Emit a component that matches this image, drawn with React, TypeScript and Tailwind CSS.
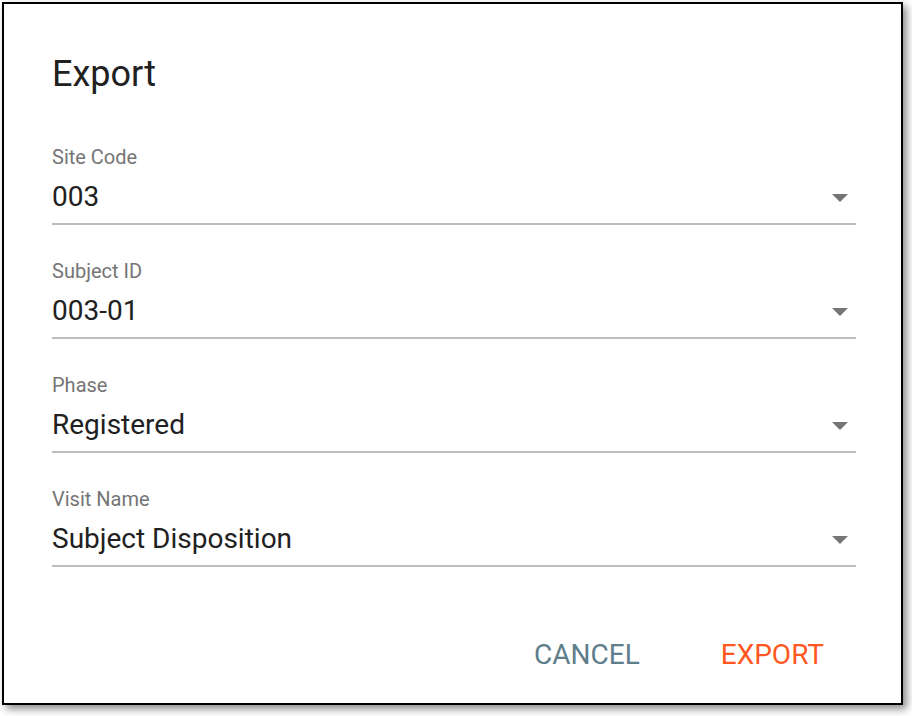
const FIELDS = [
  { label: "Site Code", value: "003" },
  { label: "Subject ID", value: "003-01" },
  { label: "Phase", value: "Registered" },
  { label: "Visit Name", value: "Subject Disposition" },
];

function SelectField({ label, value }: { label: string; value: string }) {
  return (
    <div className="flex flex-col">
      <span className="text-[20px] leading-[20px] text-[#757575]">{label}</span>
      <div className="mt-[16px] flex items-center justify-between pb-[12px] border-b-2 border-[#bdbdbd]">
        <span className="text-[28px] leading-[28px] text-[#212121]">{value}</span>
        <svg width="16" height="8" viewBox="0 0 16 8" className="mr-[8px] mt-[2px]" aria-hidden>
          <path d="M0 0h16L8 8z" fill="#757575" />
        </svg>
      </div>
    </div>
  );
}

export default function App() {
  return (
    <div className="min-h-[716px] bg-white pl-[2px] pt-[2px] font-['Roboto',sans-serif]">
      <div className="flex h-[703px] w-[901px] flex-col border-2 border-black bg-white pl-12 pr-[45px] pt-[52px] shadow-[4px_4px_8px_rgba(0,0,0,0.45)]">
        <h2 className="text-[36px] leading-[36px] text-[#212121]">Export</h2>
        <div className="mt-[55px] flex flex-col gap-[36px]">
          {FIELDS.map((f) => (
            <SelectField key={f.label} label={f.label} value={f.value} />
          ))}
        </div>
        <div className="mt-[74px] flex justify-end gap-[25px] pr-[4px]">
          <button type="button" className="px-7 text-[28px] leading-[28px] uppercase text-[#607d8b]">
            Cancel
          </button>
          <button type="button" className="px-7 text-[28px] leading-[28px] uppercase text-[#ff5722]">
            Export
          </button>
        </div>
      </div>
    </div>
  );
}
